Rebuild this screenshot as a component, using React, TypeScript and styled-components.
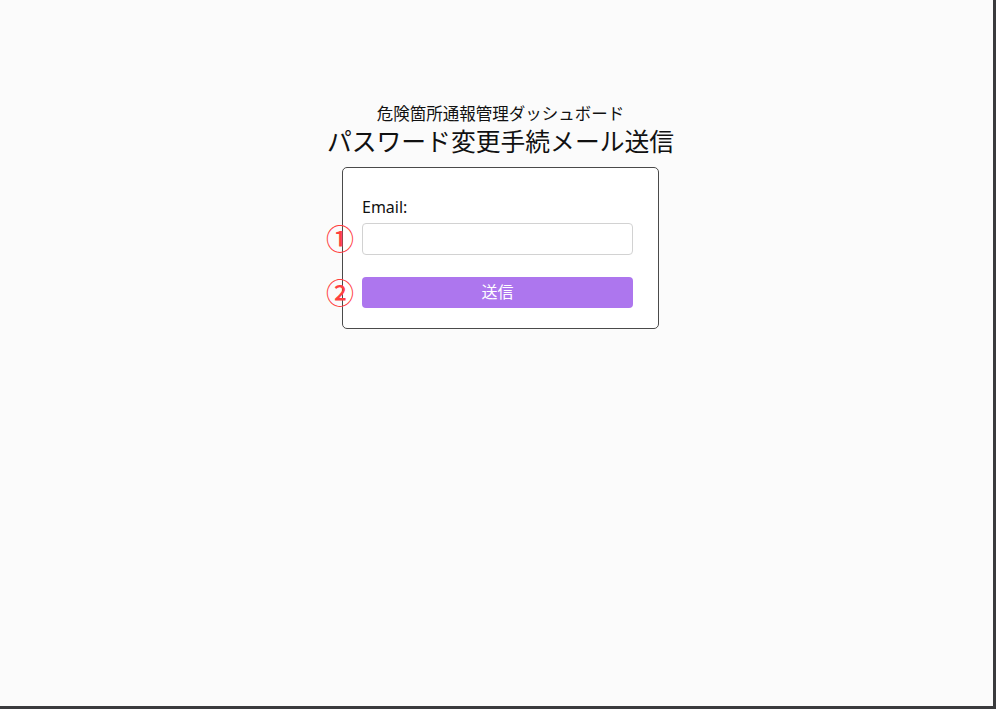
import React from "react";
import styled, { createGlobalStyle } from "styled-components";

const Global = createGlobalStyle`
  html, body { margin: 0; padding: 0; background: #3a3b3d; }
  body { font-family: "Noto Sans", "Noto Sans CJK JP", sans-serif; }
  * { box-sizing: border-box; }
`;

const Screen = styled.div`
  width: 993px;
  height: 706px;
  background: #fbfbfb;
  overflow: hidden;
`;

const Column = styled.main`
  display: flex;
  flex-direction: column;
  align-items: center;
  padding: 102px 0 0 8px;
  color: #111;
`;

const Subtitle = styled.div`
  font-family: "Noto Sans CJK JP", sans-serif;
  font-size: 16.5px;
  line-height: 22px;
`;

const Title = styled.h1`
  margin: 0 0 11px;
  font-family: "Noto Sans CJK JP", sans-serif;
  font-weight: 400;
  font-size: 24.8px;
  line-height: 32px;
`;

const Card = styled.form`
  width: 317px;
  border: 1px solid #4a4a4a;
  border-radius: 5px;
  background: #ffffff;
  padding: 28px 25px 20px 19px;
  display: flex;
  flex-direction: column;
`;

const Label = styled.label`
  font-family: "Noto Sans", sans-serif;
  font-size: 16px;
  line-height: 22px;
  margin-bottom: 5px;
`;

const Row = styled.div<{ $gap?: number }>`
  position: relative;
  margin-top: ${(p) => p.$gap ?? 0}px;
`;

const Marker = styled.span`
  position: absolute;
  left: -36px;
  top: 50%;
  transform: translateY(calc(-50% - 1px));
  font-family: "Noto Sans CJK JP", sans-serif;
  font-size: 28px;
  font-weight: 500;
  line-height: 1;
  color: #ff4040;
`;

const Input = styled.input`
  display: block;
  width: 271px;
  height: 32px;
  border: 1px solid #d2d2d2;
  border-radius: 4px;
  background: #fff;
  padding: 0 8px;
  font-size: 16px;
  outline: none;
`;

const Submit = styled.button`
  display: block;
  width: 271px;
  height: 31px;
  border: none;
  border-radius: 4px;
  background: #ad76ee;
  color: #fff;
  font-family: "Noto Sans CJK JP", sans-serif;
  font-size: 16px;
  line-height: 20px;
  padding: 0 0 4px;
  cursor: pointer;
`;

export default function App() {
  return (
    <>
      <Global />
      <Screen>
        <Column>
          <Subtitle>危険箇所通報管理ダッシュボード</Subtitle>
          <Title>パスワード変更手続メール送信</Title>
          <Card onSubmit={(e) => e.preventDefault()}>
            <Label htmlFor="email">Email:</Label>
            <Row>
              <Marker>①</Marker>
              <Input id="email" type="email" />
            </Row>
            <Row $gap={22}>
              <Marker>②</Marker>
              <Submit type="submit">送信</Submit>
            </Row>
          </Card>
        </Column>
      </Screen>
    </>
  );
}
